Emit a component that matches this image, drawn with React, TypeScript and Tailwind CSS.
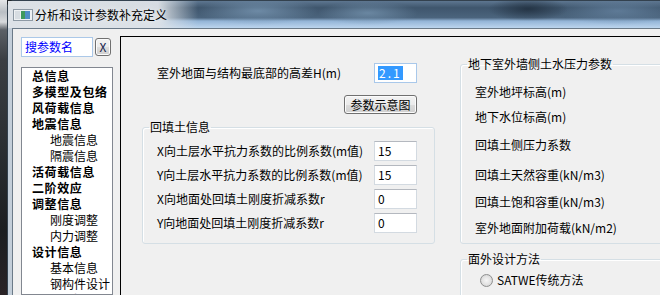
const tree: [string, boolean][] = [
  ['总信息', false],
  ['多模型及包络', false],
  ['风荷载信息', false],
  ['地震信息', false],
  ['地震信息', true],
  ['隔震信息', true],
  ['活荷载信息', false],
  ['二阶效应', false],
  ['调整信息', false],
  ['刚度调整', true],
  ['内力调整', true],
  ['设计信息', false],
  ['基本信息', true],
  ['钢构件设计', true],
  ['材料信息', false],
];

const backfillRows = [
  { label: 'X向土层水平抗力系数的比例系数(m值)', value: '15' },
  { label: 'Y向土层水平抗力系数的比例系数(m值)', value: '15' },
  { label: 'X向地面处回填土刚度折减系数r', value: '0' },
  { label: 'Y向地面处回填土刚度折减系数r', value: '0' },
];

function TextBox({ value, selected }: { value: string; selected?: boolean }) {
  return (
    <div
      className={`flex h-[20px] w-[43px] shrink-0 items-center border bg-white pl-[3px] text-[12px] leading-[14px] ${
        selected ? 'border-[#a9c8ea]' : 'border-[#d3dae1] border-t-[#b4b8bf]'
      }`}
    >
      {selected ? <span className="bg-[#3399ff] px-[1px] tracking-[2px] text-white">{value}</span> : <span>{value}</span>}
    </div>
  );
}

function TitleIcon() {
  return (
    <svg width="20" height="12" viewBox="0 0 20 12" className="shrink-0">
      <rect x="0.5" y="0.5" width="19" height="11" fill="#eef1f3" stroke="#8d99a4" />
      <rect x="2" y="2" width="5" height="8" fill="#d7dde2" />
      <rect x="8" y="2" width="4" height="8" fill="#3f9a5c" />
      <rect x="12" y="2" width="5" height="8" fill="#4f8fc4" />
    </svg>
  );
}

export default function App() {
  return (
    <div className="flex h-[295px] w-[660px] overflow-hidden bg-[#23272b] font-['Noto_Sans_CJK_SC',sans-serif] text-black">
      {/* desktop behind the window */}
      <div className="w-[7px] shrink-0 bg-[linear-gradient(180deg,#e4e6e8_0px,#b9bec3_12px,#d8dadc_22px,#5b6066_30px,#3a3e43_60px,#2c3034_140px,#1b1e21_230px,#2a2326_295px)]" />

      {/* window */}
      <div className="flex min-w-0 flex-1 flex-col rounded-tl-[7px] border-l border-t border-[#33414e] bg-[#c3ced9]">
        {/* title bar */}
        <div className="flex h-[27px] shrink-0 items-center gap-[2px] pl-[5px] pt-[1px] bg-[linear-gradient(90deg,rgba(221,226,231,1)_0px,rgba(221,226,231,0.95)_150px,rgba(221,226,231,0)_190px),radial-gradient(ellipse_60px_14px_at_250px_10px,rgba(120,150,178,0.8),transparent),radial-gradient(ellipse_50px_12px_at_360px_12px,rgba(115,145,172,0.8),transparent),radial-gradient(ellipse_40px_12px_at_520px_8px,rgba(25,38,52,0.7),transparent),radial-gradient(ellipse_60px_14px_at_610px_10px,rgba(105,135,165,0.7),transparent),linear-gradient(180deg,#5d7690_0%,#3f566d_25%,#4b647d_62%,#93b4d6_74%,#bcd5ee_100%)]">
          <TitleIcon />
          <span className="text-[12px] leading-[16px] [text-shadow:0_0_6px_#fff]">分析和设计参数补充定义</span>
        </div>

        {/* client area */}
        <div className="ml-[4px] flex min-h-0 flex-1 items-start border-l border-t border-[#6b7a88] bg-[#f0f0f0]">
          {/* left: search + tree */}
          <div className="flex h-full w-[100px] shrink-0 flex-col pl-[8px] pt-[8px]">
            <div className="flex items-start gap-[2px]">
              <div className="flex h-[20px] w-[72px] items-center border border-[#abc8e8] bg-white pl-[3px] text-[12px] leading-[14px] text-[#0000ff]">
                搜参数名
              </div>
              <div className="mt-[1px] flex h-[18px] w-[16px] items-center justify-center rounded-[3px] border border-[#707070] bg-[linear-gradient(180deg,#f2f2f2_0%,#ebebeb_50%,#dddddd_50%,#cfcfcf_100%)] text-[12px] leading-none text-[#15204a] shadow-[inset_0_0_0_1px_#fbfbfb]">
                X
              </div>
            </div>
            <div className="mt-[10px] flex-1 overflow-hidden border border-[#828790] bg-white">
              {tree.map(([name, sub], i) => (
                <div
                  key={i}
                  className={`h-[16px] whitespace-nowrap leading-[16px] ${
                    sub ? 'pl-[28px] text-[12px]' : 'pl-[10px] text-[12px] font-bold tracking-[0.6px]'
                  }`}
                >
                  {name}
                </div>
              ))}
            </div>
          </div>

          {/* right: parameter panel */}
          <div className="ml-[7px] mt-[7px] flex h-full flex-1 border-l border-t border-black pl-[21px] text-[12px]">
            {/* left column */}
            <div className="flex w-[293px] shrink-0 flex-col">
              <div className="mt-[26px] flex h-[20px] items-center justify-between pl-[15px] pr-[18px]">
                <span className="leading-[14px]">室外地面与结构最底部的高差H(m)</span>
                <TextBox value="2.1" selected />
              </div>
              <div className="mr-[18px] mt-[12px] flex h-[19px] w-[73px] items-center justify-center self-end rounded-[3px] border border-[#707070] bg-[linear-gradient(180deg,#f2f2f2_0%,#ebebeb_50%,#dddddd_50%,#cfcfcf_100%)] leading-[14px] shadow-[inset_0_0_0_1px_#fbfbfb]">
                参数示意图
              </div>
              <fieldset className="mt-[5px] rounded-[3px] border border-[#d5dfe5] shadow-[inset_1px_1px_0_#fff]">
                <legend className="ml-[6px] px-[1px] leading-[16px]">回填土信息</legend>
                <div className="flex flex-col gap-[4px] pb-[10px] pl-[14px] pr-[17px] pt-[6px]">
                  {backfillRows.map((r) => (
                    <div key={r.label} className="flex h-[20px] items-center justify-between">
                      <span className="leading-[14px]">{r.label}</span>
                      <TextBox value={r.value} />
                    </div>
                  ))}
                </div>
              </fieldset>
            </div>

            {/* right column */}
            <div className="ml-[25px] flex w-[260px] shrink-0 flex-col">
              <fieldset className="mt-[19px] rounded-[3px] border border-[#d5dfe5] shadow-[inset_1px_1px_0_#fff]">
                <legend className="ml-[6px] px-[1px] leading-[16px]">地下室外墙侧土水压力参数</legend>
                <div className="flex flex-col pb-[5px] pl-[14px] leading-[20px]">
                  <div className="mt-[10px] h-[20px]">室外地坪标高(m)</div>
                  <div className="mt-[5px] h-[20px]">地下水位标高(m)</div>
                  <div className="mt-[8px] h-[20px]">回填土侧压力系数</div>
                  <div className="mt-[10px] h-[20px]">回填土天然容重(kN/m3)</div>
                  <div className="mt-[7px] h-[20px]">回填土饱和容重(kN/m3)</div>
                  <div className="mt-[6px] h-[20px]">室外地面附加荷载(kN/m2)</div>
                </div>
              </fieldset>
              <fieldset className="mt-[7px] h-[60px] rounded-[3px] border border-[#d5dfe5] shadow-[inset_1px_1px_0_#fff]">
                <legend className="ml-[6px] px-[1px] leading-[16px]">面外设计方法</legend>
                <div className="mt-[3px] flex h-[20px] items-center gap-[4px] pl-[19px]">
                  <span className="h-[13px] w-[13px] rounded-full border border-[#8e8f8f] bg-[radial-gradient(circle_at_50%_50%,#f6f6f6_0%,#e2e2e2_55%,#c9c9c9_100%)]" />
                  <span className="leading-[14px]">SATWE传统方法</span>
                </div>
              </fieldset>
            </div>
          </div>
        </div>
      </div>
    </div>
  );
}
